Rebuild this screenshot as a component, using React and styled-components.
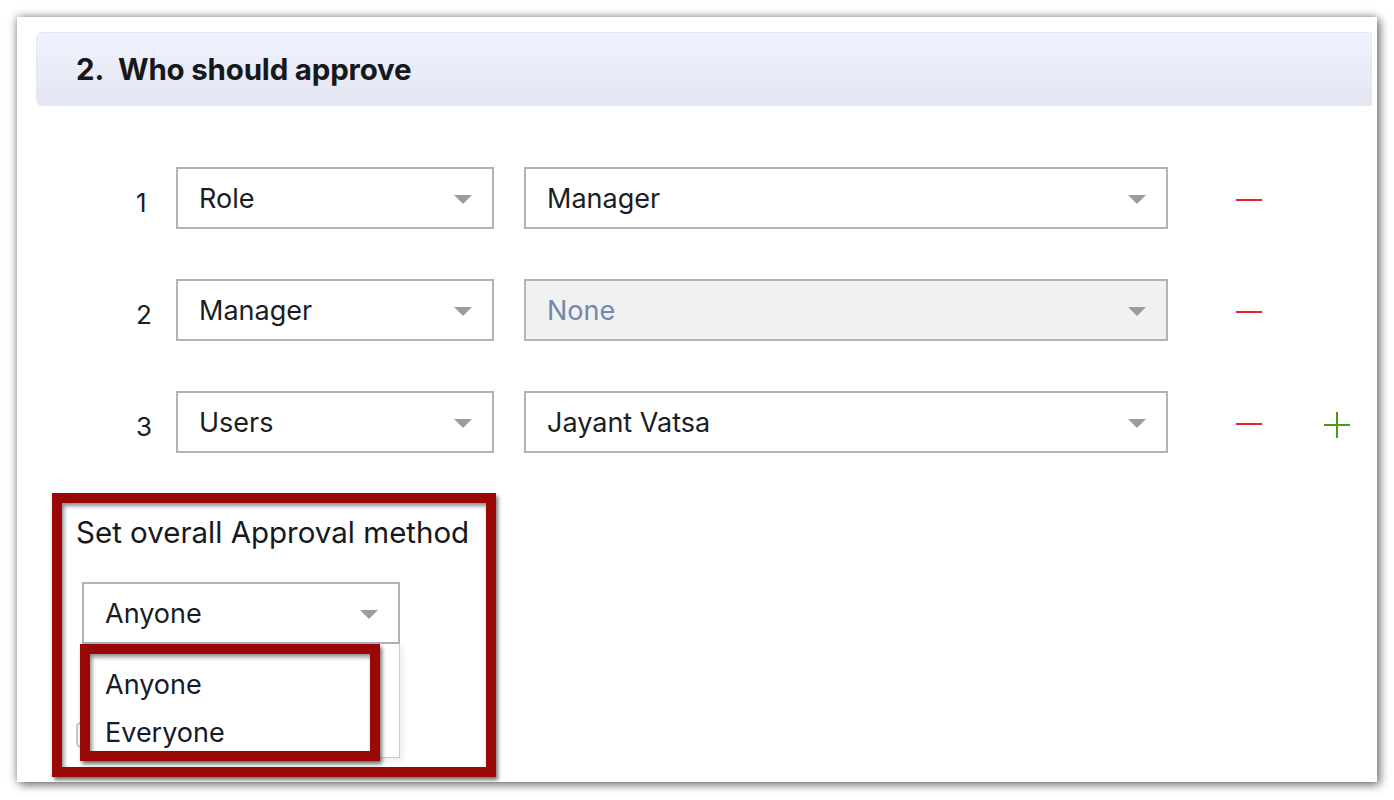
import React from "react";
import styled, { createGlobalStyle } from "styled-components";

const GlobalStyle = createGlobalStyle`
  html, body { margin: 0; padding: 0; background: #ffffff; }
  body { font-family: Inter, "Noto Sans", "Liberation Sans", sans-serif; color: #1b1d22; }
  * { box-sizing: border-box; }
`;

const Page = styled.div`
  width: 1394px;
  height: 800px;
  padding: 17px 17px 18px 17px;
`;

const Panel = styled.div`
  width: 1360px;
  height: 765px;
  background: #ffffff;
  box-shadow: 3px 3px 9px rgba(0, 0, 0, 0.5), -1px -1px 8px rgba(0, 0, 0, 0.28);
  padding: 15px 5px 0 19px;
  display: flex;
  flex-direction: column;
  overflow: hidden;
`;

const Header = styled.div`
  height: 74px;
  border: 1px solid #e3e7f2;
  border-radius: 6px 0 0 6px;
  background: linear-gradient(#f0f3fd, #e3e6f1);
  display: flex;
  align-items: center;
  padding-left: 39px;
  font-size: 29.5px;
  font-weight: 700;
  color: #17181c;
  letter-spacing: -0.2px;
`;

const Num = styled.span`
  margin-right: 14px;
`;

const Rows = styled.div`
  margin-top: 61px;
  padding-left: 100px;
  display: flex;
  flex-direction: column;
  gap: 50px;
`;

const Row = styled.div`
  display: flex;
  align-items: center;
  height: 62px;
`;

const Index = styled.div`
  width: 40px;
  font-size: 26px;
  padding-top: 8px;
  color: #1b1d22;
`;

const Select = styled.div`
  width: ${(p) => p.$w}px;
  height: 62px;
  margin-left: ${(p) => p.$ml || 0}px;
  border: 2px solid #acb5bd;
  background: ${(p) => (p.$disabled ? "#f1f1f1" : "#ffffff")};
  color: ${(p) => (p.$disabled ? "#7387ad" : "#1b1d22")};
  display: flex;
  align-items: center;
  justify-content: space-between;
  padding: 0 20px 0 21px;
  font-size: 27px;
  flex-shrink: 0;
`;

const Arrow = styled.span`
  width: 0;
  height: 0;
  border-left: 9px solid transparent;
  border-right: 9px solid transparent;
  border-top: 9px solid #9c9c9c;
  margin-top: 3px;
`;

const Minus = styled.div`
  width: 26px;
  height: 2px;
  margin: 3px 0 0 68px;
  background: #ee2020;
  flex-shrink: 0;
`;

const Plus = styled.div`
  position: relative;
  width: 26px;
  height: 26px;
  margin: 6px 0 0 62px;
  flex-shrink: 0;
  &::before, &::after {
    content: "";
    position: absolute;
    background: #4a9a12;
  }
  &::before { left: 0; right: 0; top: 12px; height: 2px; }
  &::after { top: 0; bottom: 0; left: 12px; width: 2px; }
`;

const MarkFrame = styled.div`
  border: 10px solid #990707;
  box-shadow: 2px 3px 4px rgba(0, 0, 0, 0.55), inset 2px 3px 4px rgba(0, 0, 0, 0.45);
`;

const MethodBox = styled(MarkFrame)`
  margin-top: 40px;
  margin-left: 16px;
  width: 444px;
  height: 284px;
  display: flex;
  flex-direction: column;
  align-items: flex-start;
`;

const Label = styled.div`
  margin: 9px 0 0 14px;
  font-size: 29.5px;
  line-height: 40px;
  color: #17181c;
`;

const SelectWrap = styled.div`
  position: relative;
  margin: 30px 0 0 20px;
`;

const Menu = styled.div`
  position: absolute;
  left: 0;
  top: 100%;
  width: 318px;
  height: 114px;
  background: #ffffff;
  border: 1px solid #c6cdd4;
  border-top: none;
  padding-top: 17px;
  box-shadow: 3px 3px 6px rgba(0, 0, 0, 0.08);
  z-index: 2;
`;

const Option = styled.div`
  height: 48px;
  line-height: 48px;
  padding-left: 22px;
  font-size: 27px;
  color: #141a2c;
`;

const OptionFrame = styled(MarkFrame)`
  position: absolute;
  left: -2px;
  top: 62px;
  width: 300px;
  height: 117px;
  z-index: 3;
`;

const Checkbox = styled.div`
  margin: 78px 0 0 14px;
  width: 24px;
  height: 26px;
  border: 2px solid #c4c4c4;
  border-radius: 5px;
`;

const rows = [
  { n: 1, type: "Role", value: "Manager" },
  { n: 2, type: "Manager", value: "None", disabled: true },
  { n: 3, type: "Users", value: "Jayant Vatsa", add: true },
];

export default function App() {
  return (
    <>
      <GlobalStyle />
      <Page>
        <Panel>
          <Header>
            <Num>2.</Num>Who should approve
          </Header>
          <Rows>
            {rows.map((r) => (
              <Row key={r.n}>
                <Index>{r.n}</Index>
                <Select $w={318}>
                  <span>{r.type}</span>
                  <Arrow />
                </Select>
                <Select $w={644} $ml={30} $disabled={r.disabled}>
                  <span>{r.value}</span>
                  <Arrow />
                </Select>
                <Minus />
                {r.add && <Plus />}
              </Row>
            ))}
          </Rows>
          <MethodBox>
            <Label>Set overall Approval method</Label>
            <SelectWrap>
              <Select $w={318}>
                <span>Anyone</span>
                <Arrow />
              </Select>
              <Menu>
                <Option>Anyone</Option>
                <Option>Everyone</Option>
              </Menu>
              <OptionFrame />
            </SelectWrap>
            <Checkbox />
          </MethodBox>
        </Panel>
      </Page>
    </>
  );
}
